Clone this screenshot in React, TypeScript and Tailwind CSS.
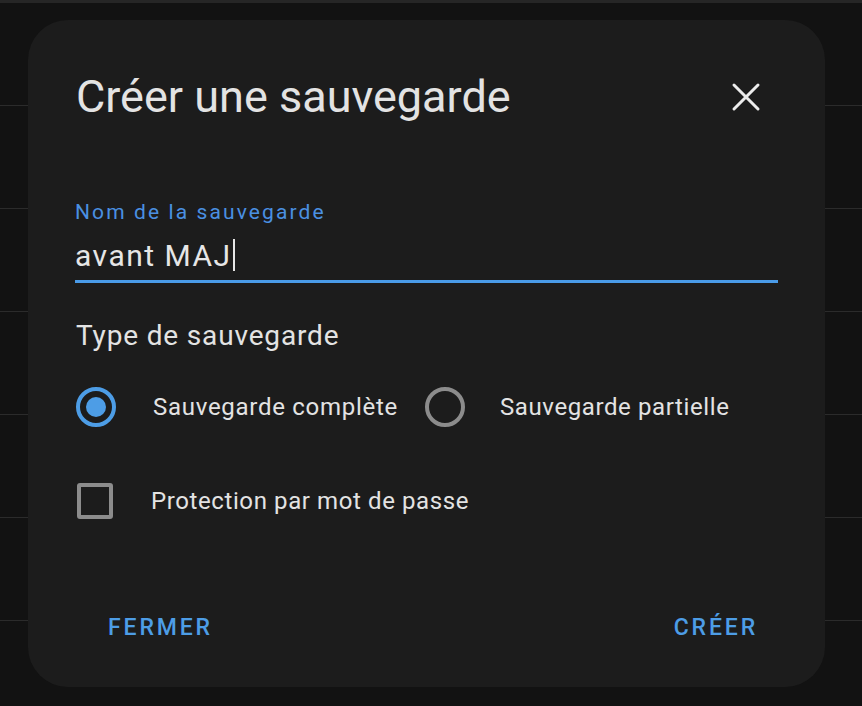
import React from "react";

const font = { fontFamily: "Roboto, 'Noto Sans', sans-serif" };

export default function App() {
  return (
    <div className="relative w-[862px] h-[706px] overflow-hidden bg-[#121212]" style={font}>
      <div className="h-[3px] bg-[#262626]" />
      <div className="flex flex-col">
        {[0, 1, 2, 3, 4, 5].map((i) => (
          <div key={i} className="h-[103px] border-b border-[#2b2b2b]" />
        ))}
      </div>

      <div className="absolute left-[28px] top-[20px] w-[797px] h-[667px] rounded-[40px] bg-[#1c1c1c] flex flex-col">
        <div className="flex items-center justify-between pl-[48px] pr-[64px] pt-[54px]">
          <h2 className="text-[45px] leading-[46px] text-[#e3e3e3] font-normal">Créer une sauvegarde</h2>
          <svg width="30" height="30" viewBox="0 0 30 30" className="text-[#ececec]">
            <path d="M3 3 L27 27 M27 3 L3 27" stroke="currentColor" strokeWidth="3" strokeLinecap="round" />
          </svg>
        </div>

        <div className="mx-[47px] mt-[80px]">
          <div className="text-[21px] leading-[24px] text-[#4a90e2] tracking-[0.1em]">Nom de la sauvegarde</div>
          <div className="flex items-center mt-[10px] h-[42px]">
            <span className="text-[30px] text-[#e6e6e6] tracking-[0.05em]">avant MAJ</span>
            <span className="w-[2px] h-[32px] bg-[#e6e6e6] ml-[1px]" />
          </div>
          <div className="h-[3px] bg-[#4a9be8] mt-[4px]" />
        </div>

        <div className="ml-[48px] mt-[37px] text-[28px] leading-[32px] text-[#e3e3e3] tracking-[0.03em]">Type de sauvegarde</div>

        <div className="flex items-center ml-[48px] mt-[35px]">
          <div className="w-[40px] h-[40px] rounded-full border-[4px] border-[#4d9de6] flex items-center justify-center">
            <div className="w-[20px] h-[20px] rounded-full bg-[#4d9de6]" />
          </div>
          <span className="ml-[37px] text-[24px] text-[#e3e3e3] tracking-[0.03em]">Sauvegarde complète</span>
          <div className="ml-[27px] w-[40px] h-[40px] rounded-full border-[4px] border-[#8c8c8c]" />
          <span className="ml-[35px] text-[24px] text-[#e3e3e3] tracking-[0.025em]">Sauvegarde partielle</span>
        </div>

        <div className="flex items-center ml-[49px] mt-[56px]">
          <div className="w-[36px] h-[36px] rounded-[3px] border-[4px] border-[#8c8c8c]" />
          <span className="ml-[38px] text-[24px] text-[#e3e3e3] tracking-[0.025em]">Protection par mot de passe</span>
        </div>

        <div className="flex items-center justify-between pl-[80px] pr-[67px] mt-auto mb-[42px]">
          <span className="text-[23px] font-medium tracking-[0.125em] text-[#4d9de6]">FERMER</span>
          <span className="text-[23px] font-medium tracking-[0.125em] text-[#4d9de6]">CRÉER</span>
        </div>
      </div>
    </div>
  );
}
